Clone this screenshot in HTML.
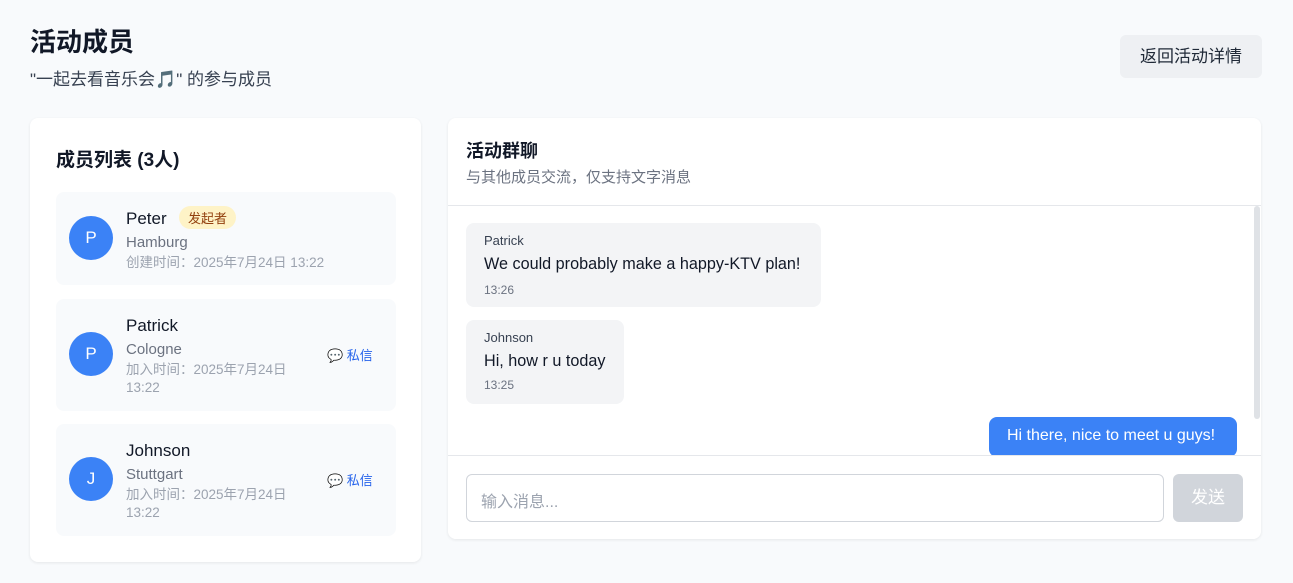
<!DOCTYPE html>
<html><head><meta charset="utf-8"><style>
*{box-sizing:border-box;margin:0;padding:0}
body{width:1293px;height:583px;background:#f8fafc;font-family:"Liberation Sans","Noto Sans CJK SC",sans-serif;color:#111827;position:relative;overflow:hidden}
.abs{position:absolute}
h1{position:absolute;left:30px;top:22px;font-size:26px;font-weight:bold}
.sub{left:30px;top:65px;font-size:17px;color:#374151}
.back{left:1120px;top:35px;width:142px;height:43px;background:#eef0f3;border-radius:6px;font-size:17px;color:#1f2937;text-align:center;line-height:43px}
.card{background:#fff;border-radius:8px;box-shadow:0 1px 3px rgba(0,0,0,.08)}
.m{position:absolute;left:56px;width:340px;background:#f8fafc;border-radius:8px}
.av{position:absolute;left:13px;width:44px;height:44px;border-radius:50%;background:#3b82f6;color:#fff;font-size:17px;text-align:center;line-height:44px}
.nm{position:absolute;left:70px;font-size:17px;color:#111827}
.ct{position:absolute;left:70px;font-size:15px;color:#6b7280}
.tm{position:absolute;left:70px;font-size:13.5px;color:#9ca3af;line-height:18px}
.pm{position:absolute;left:271px;font-size:13px;color:#2563eb}
.bub{position:absolute;background:#f3f4f6;border-radius:8px;padding:0 18px}
</style></head><body>
<h1>活动成员</h1>
<div class="abs sub">"一起去看音乐会🎵" 的参与成员</div>
<div class="abs back">返回活动详情</div>

<div class="abs card" style="left:30px;top:118px;width:391px;height:444px"></div>
<div class="abs" style="left:56px;top:145px;font-size:19px;font-weight:bold">成员列表 (3人)</div>

<div class="m" style="top:192px;height:93px">
<div class="av" style="top:24px">P</div>
<div class="nm" style="top:17px">Peter</div>
<div class="abs" style="left:123px;top:14px;background:#fef3c7;color:#92400e;font-size:13px;border-radius:12px;padding:2px 9px">发起者</div>
<div class="ct" style="top:42px">Hamburg</div>
<div class="tm" style="top:62px">创建时间：2025年7月24日 13:22</div>
</div>
<div class="m" style="top:299px;height:112px">
<div class="av" style="top:33px">P</div>
<div class="nm" style="top:17px">Patrick</div>
<div class="ct" style="top:42px">Cologne</div>
<div class="tm" style="top:62px">加入时间：2025年7月24日<br>13:22</div>
<div class="pm" style="top:46px">💬 私信</div>
</div>
<div class="m" style="top:424px;height:112px">
<div class="av" style="top:33px">J</div>
<div class="nm" style="top:17px">Johnson</div>
<div class="ct" style="top:42px">Stuttgart</div>
<div class="tm" style="top:62px">加入时间：2025年7月24日<br>13:22</div>
<div class="pm" style="top:46px">💬 私信</div>
</div>

<div class="abs card" style="left:448px;top:118px;width:813px;height:421px;overflow:hidden">
<div class="abs" style="left:18px;top:19px;font-size:18px;font-weight:bold">活动群聊</div>
<div class="abs" style="left:18px;top:48px;font-size:15px;color:#6b7280">与其他成员交流，仅支持文字消息</div>
<div class="abs" style="left:0;top:87px;width:813px;border-top:1px solid #e5e7eb"></div>
<div class="abs" style="left:806px;top:88px;width:6px;height:213px;background:#dfe2e6;border-radius:3px"></div>
<div class="bub" style="left:18px;top:105px;width:355px;height:84px">
<div class="abs" style="left:18px;top:10px;font-size:13px;color:#374151">Patrick</div>
<div class="abs" style="left:18px;top:32px;font-size:16.2px;white-space:nowrap">We could probably make a happy-KTV plan!</div>
<div class="abs" style="left:18px;top:60px;font-size:12px;color:#6b7280">13:26</div></div>
<div class="bub" style="left:18px;top:202px;width:158px;height:84px">
<div class="abs" style="left:18px;top:10px;font-size:13px;color:#374151">Johnson</div>
<div class="abs" style="left:18px;top:32px;font-size:16.2px;white-space:nowrap">Hi, how r u today</div>
<div class="abs" style="left:18px;top:58px;font-size:12px;color:#6b7280">13:25</div></div>
<div class="abs" style="left:541px;top:299px;width:248px;height:40px;background:#3b82f6;border-radius:8px;color:#fff;font-size:16px;padding:10px 18px;white-space:nowrap">Hi there, nice to meet u guys!</div>
<div class="abs" style="left:0;top:337px;width:813px;height:84px;background:#fff;border-top:1px solid #e5e7eb"></div>
<div class="abs" style="left:18px;top:356px;width:698px;height:48px;border:1px solid #d1d5db;border-radius:6px;font-size:16px;color:#9ca3af;padding:13px 14px">输入消息...</div>
<div class="abs" style="left:725px;top:356px;width:70px;height:48px;background:#d1d5db;border-radius:6px;color:#fff;font-size:17px;text-align:center;line-height:48px">发送</div>
</div>
</body></html>
